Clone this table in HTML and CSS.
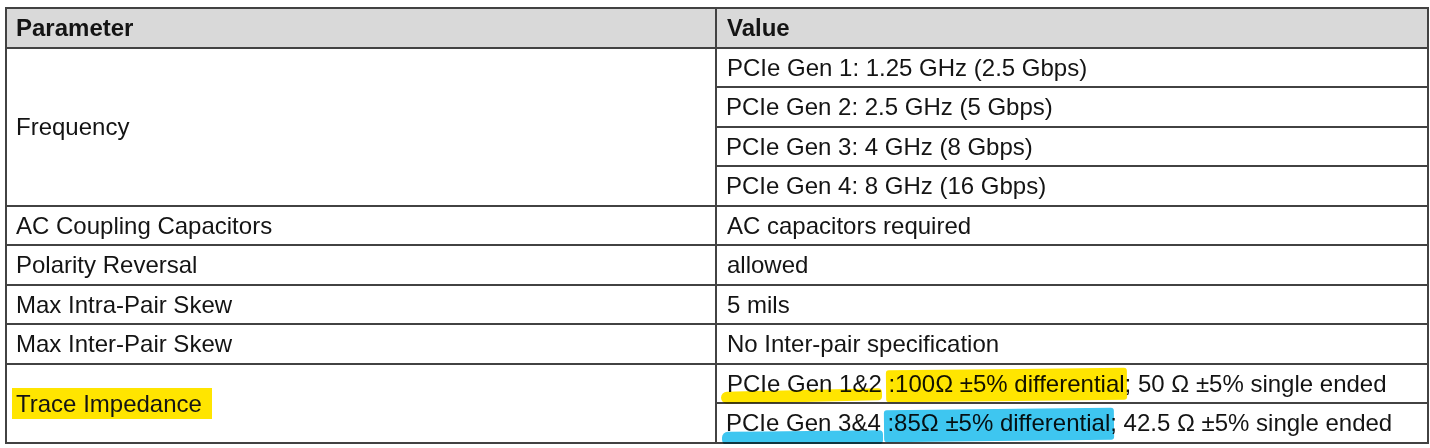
FILE: index.html
```html
<!DOCTYPE html>
<html>
<head>
<meta charset="utf-8">
<link rel="stylesheet" href="styles.css">
</head>
<body>
<table class="spec">
  <colgroup><col class="c1"><col class="c2"></colgroup>
  <thead>
    <tr><th>Parameter</th><th>Value</th></tr>
  </thead>
  <tbody>
    <tr><td rowspan="4">Frequency</td><td>PCIe Gen 1: 1.25 GHz (2.5 Gbps)</td></tr>
    <tr><td>PCIe Gen 2: 2.5 GHz (5 Gbps)</td></tr>
    <tr><td>PCIe Gen 3: 4 GHz (8 Gbps)</td></tr>
    <tr><td>PCIe Gen 4: 8 GHz (16 Gbps)</td></tr>
    <tr><td>AC Coupling Capacitors</td><td>AC capacitors required</td></tr>
    <tr><td>Polarity Reversal</td><td>allowed</td></tr>
    <tr><td>Max Intra-Pair Skew</td><td>5 mils</td></tr>
    <tr><td>Max Inter-Pair Skew</td><td>No Inter-pair specification</td></tr>
    <tr><td rowspan="2"><span class="mark-y">Trace Impedance</span></td><td><span class="ul ul-y">PCIe Gen 1&amp;2</span> <span class="hl hl-y">:100Ω ±5% differential</span>; 50 Ω ±5% single ended</td></tr>
    <tr><td><span class="ul ul-b">PCIe Gen 3&amp;4</span> <span class="hl hl-b">:85Ω ±5% differential</span>; 42.5 Ω ±5% single ended</td></tr>
  </tbody>
</table>
</body>
</html>
```
FILE: styles.css
```css
html, body {
  margin: 0;
  padding: 0;
  background: #ffffff;
}
body {
  padding: 7px 0 0 5px;
  font-family: "Liberation Sans", Arial, sans-serif;
  color: #141414;
  overflow: hidden;
}
.spec {
  border-collapse: collapse;
  width: 1422px;
  table-layout: fixed;
  font-size: 24px;
}
.c1 { width: 710px; }
.c2 { width: 712px; }
.spec th, .spec td {
  border: 2px solid #424242;
  height: 39.5px;
  padding: 0 0 0 9px;
  box-sizing: border-box;
  text-align: left;
  vertical-align: middle;
  white-space: nowrap;
  line-height: 27px;
}
.spec td + td, .spec th + th { padding-left: 10px; }
.spec th {
  background: #d9d9d9;
  font-weight: bold;
}
.mark-y {
  background: #ffe500;
  padding: 2px 10px 2px 4px;
  margin-left: -4px;
}
.hl, .ul { position: relative; }
.hl::before {
  content: "";
  position: absolute;
  left: -2px;
  right: -3px;
  top: -1px;
  bottom: -4px;
  mix-blend-mode: multiply;
  border-radius: 3px;
  transform: rotate(-0.6deg);
}
.hl-y::before { background: #ffe500; }
.hl-b::before { background: #3ec6f0; left: -3px; right: -4px; top: 0; bottom: -5px; }
.ul::after {
  content: "";
  position: absolute;
  left: -6px;
  right: 0;
  top: 20px;
  height: 12px;
  mix-blend-mode: multiply;
  border-radius: 6px 4px 4px 6px;
  transform: rotate(-1.3deg);
}
.ul-y::after { background: #ffe500; }
.ul-b::after { background: #3ec6f0; top: 22px; left: -4px; right: -2px; height: 14px; transform: rotate(-0.6deg); }
```
